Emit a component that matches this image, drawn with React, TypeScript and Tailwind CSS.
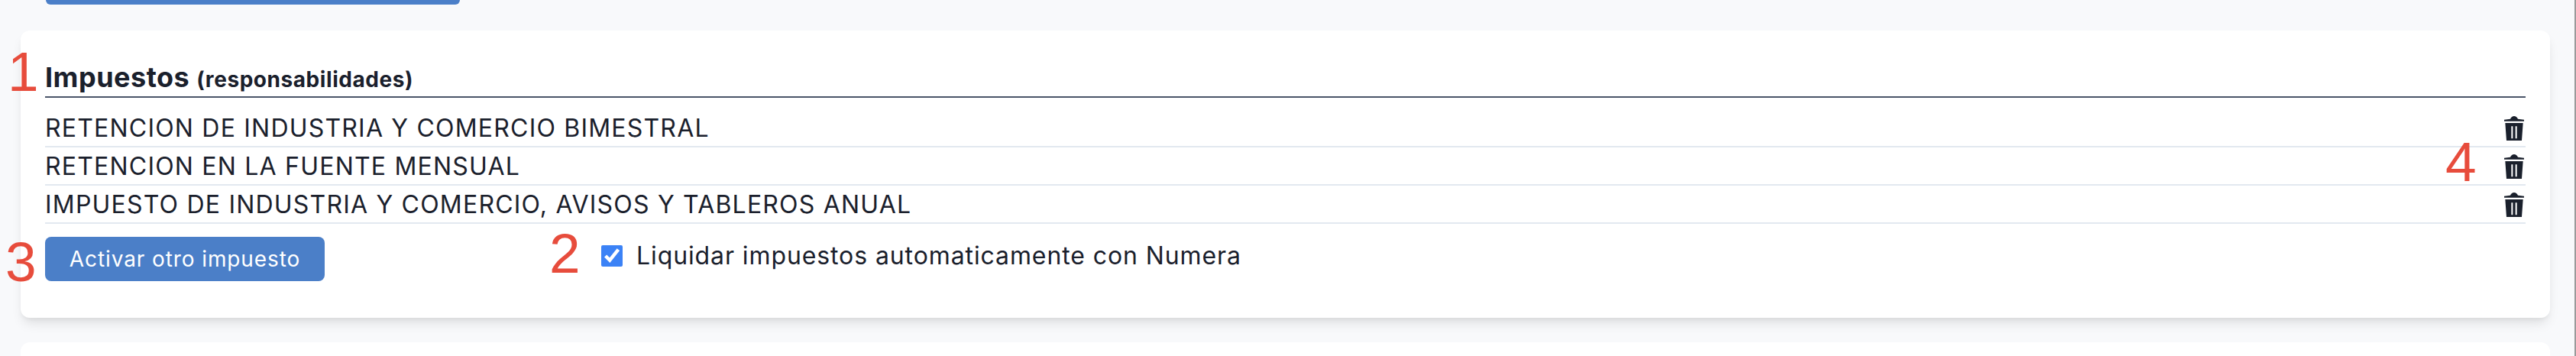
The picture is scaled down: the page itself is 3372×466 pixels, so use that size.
import React from "react";

const rows = [
  "RETENCION DE INDUSTRIA Y COMERCIO BIMESTRAL",
  "RETENCION EN LA FUENTE MENSUAL",
  "IMPUESTO DE INDUSTRIA Y COMERCIO, AVISOS Y TABLEROS ANUAL",
];

function TrashIcon() {
  return (
    <svg viewBox="0 0 78 96" className="mt-[2px] w-[26px] h-[32px] fill-[#1a202c]">
      <path d="M0 20 L0 14 L24 11 C28 4 32 0 39 0 C46 0 50 4 54 11 L78 14 L78 20 Z" />
      <path fillRule="evenodd" d="M4 27 H74 L69 96 H9 Z M28 40 V88 H34 V40 Z M44 40 V88 H50 V40 Z" />
    </svg>
  );
}

function Mark({ className, children }: { className: string; children: React.ReactNode }) {
  return (
    <span className={`absolute font-['Liberation_Sans',sans-serif] text-[73px] leading-none text-[#e74c3c] ${className}`}>
      {children}
    </span>
  );
}

export default function App() {
  return (
    <div className="relative h-[466px] w-[3372px] overflow-hidden bg-[#f8f9fb] font-['Inter',sans-serif] text-[#1a202c]">
      <div className="ml-[60px] h-[6px] w-[542px] rounded-b-lg bg-[#4b7fc8]" />

      <section className="ml-[27px] mt-[34px] h-[376px] w-[3311px] rounded-xl bg-white pl-[32px] pr-[32px] pt-[42px] shadow-[0_10px_15px_-3px_rgba(0,0,0,0.1),0_4px_6px_-2px_rgba(0,0,0,0.05)]">
        <h2 className="flex h-[46px] items-baseline gap-[9px] border-b-2 border-[#4a5568] text-[36px] font-bold leading-[38px] tracking-[0.5px]">
          Impuestos <span className="text-[28px] tracking-[0.56px]">(responsabilidades)</span>
        </h2>
        <ul className="mt-[15px]">
          {rows.map((row) => (
            <li key={row} className="flex h-[50px] items-center justify-between border-b-2 border-[#e2e8f0] pr-[2px] text-[32px] leading-none tracking-[1.2px]">
              <span className="pt-[2px]">{row}</span>
              <TrashIcon />
            </li>
          ))}
        </ul>
        <div className="mt-[17px] flex items-start">
          <button className="h-[58px] w-[366px] rounded-lg bg-[#4b7fc8] text-[28px] tracking-[0.9px] text-white">Activar otro impuesto</button>
          <label className="ml-[362px] mt-[6px] flex items-center gap-[18px] text-[32px] leading-[38px] tracking-[0.9px]">
            <input type="checkbox" defaultChecked className="h-[28px] w-[28px] accent-[#3b82f6]" />
            Liquidar impuestos automaticamente con Numera
          </label>
        </div>
      </section>

      <section className="ml-[27px] mt-[32px] h-[40px] w-[3311px] rounded-t-xl bg-white" />

      <div className="absolute right-0 top-0 h-full w-[2px] bg-[#9a9a9a]" />
      <Mark className="left-[10px] top-[57px]">1</Mark>
      <Mark className="left-[719px] top-[295px]">2</Mark>
      <Mark className="left-[7px] top-[306px]">3</Mark>
      <Mark className="left-[3201px] top-[175px]">4</Mark>
    </div>
  );
}
